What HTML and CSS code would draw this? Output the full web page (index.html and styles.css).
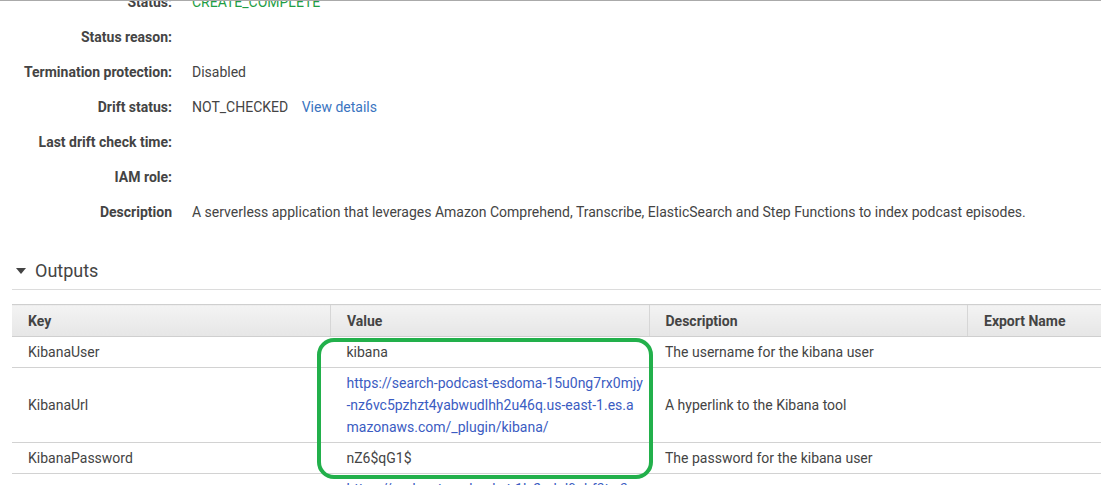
FILE: index.html
```html
<!DOCTYPE html>
<html>
<head>
<meta charset="utf-8">
<link rel="stylesheet" href="styles.css">
</head>
<body>
<div class="viewport">
  <div class="content">
    <dl class="details">
      <dt>Status:</dt><dd class="ok">CREATE_COMPLETE</dd>
      <dt>Status reason:</dt><dd></dd>
      <dt>Termination protection:</dt><dd>Disabled</dd>
      <dt>Drift status:</dt><dd>NOT_CHECKED <a class="link view" href="#">View details</a></dd>
      <dt>Last drift check time:</dt><dd></dd>
      <dt>IAM role:</dt><dd></dd>
      <dt>Description</dt><dd>A serverless application that leverages Amazon Comprehend, Transcribe, ElasticSearch and Step Functions to index podcast episodes.</dd>
    </dl>

    <h2 class="section"><span class="caret"></span>Outputs</h2>

    <div class="table-wrap">
      <table class="outputs">
        <thead>
          <tr><th>Key</th><th>Value</th><th>Description</th><th>Export Name</th></tr>
        </thead>
        <tbody>
          <tr><td>KibanaUser</td><td>kibana</td><td>The username for the kibana user</td><td></td></tr>
          <tr><td>KibanaUrl</td><td class="url"><a class="link" href="#"><span class="ln">https://search-podcast-esdoma-15u0ng7rx0mjy</span><span class="ln">-nz6vc5pzhzt4yabwudlhh2u46q.us-east-1.es.a</span><span class="ln">mazonaws.com/_plugin/kibana/</span></a></td><td>A hyperlink to the Kibana tool</td><td></td></tr>
          <tr><td>KibanaPassword</td><td>nZ6$qG1$</td><td>The password for the kibana user</td><td></td></tr>
          <tr><td>RssGeneratorUrl</td><td class="url"><a class="link" href="#"><span class="ln">https://podcast-rss-bucket-1lx2mkd9qhf3t.s3</span><span class="ln">.amazonaws.com/podcasts/feeds/index.html?so</span><span class="ln">urce=cloudformation-outputs</span></a></td><td>The URL of the podcast feed</td><td></td></tr>
        </tbody>
      </table>
      <div class="highlight"></div>
    </div>
  </div>
</div>
</body>
</html>
```

FILE: styles.css
```css
html, body {
  margin: 0;
  padding: 0;
  background: #fff;
}
body {
  font-family: Roboto, "Liberation Sans", Arial, sans-serif;
  font-size: 14px;
  color: #444;
}
.viewport {
  height: 484px;
  overflow: hidden;
  border-top: 1px solid #aaaaaa;
}
.content {
  margin-top: -16px;
}
.details {
  display: grid;
  grid-template-columns: 172px 1fr;
  column-gap: 20px;
  margin: 0;
}
.details dt {
  text-align: right;
  font-weight: 700;
  color: #444;
  line-height: 35px;
  height: 35px;
  white-space: nowrap;
}
.details dd {
  margin: 0;
  line-height: 35px;
  height: 35px;
  color: #444;
  white-space: nowrap;
}
.details dd.ok {
  color: #1f9e45;
}
.link {
  color: #3b5cc2;
  text-decoration: none;
}
.view {
  color: #3a74bf;
  margin-left: 10px;
}
.section {
  margin: 23px 0 0 12px;
  height: 36px;
  line-height: 36px;
  border-bottom: 1px solid #dcdcdc;
  font-size: 18px;
  font-weight: 400;
  color: #444;
  display: flex;
  align-items: center;
}
.caret {
  width: 0;
  height: 0;
  border-left: 5px solid transparent;
  border-right: 5px solid transparent;
  border-top: 6px solid #444;
  margin: 0 9px 0 4px;
}
.table-wrap {
  position: relative;
  margin: 14px 0 0 12px;
  width: 1274px;
}
.outputs {
  border-collapse: collapse;
  table-layout: fixed;
  width: 1274px;
}
.outputs th {
  height: 31px;
  padding: 0 16px;
  text-align: left;
  font-weight: 700;
  color: #444;
  background: linear-gradient(#f3f3f3, #e6e6e6);
  border-top: 1px solid #cfcfcf;
  border-bottom: 1px solid #cfcfcf;
  border-left: 1px solid #d6d6d6;
  white-space: nowrap;
}
.outputs th:first-child {
  border-left: none;
}
.outputs td {
  height: 31px;
  padding: 4px 2px 4px 16px;
  box-sizing: border-box;
  line-height: 22px;
  border-bottom: 1px solid #d2d2d2;
  color: #444;
  vertical-align: middle;
}
.outputs td.url .ln {
  display: block;
  white-space: nowrap;
}
.highlight {
  position: absolute;
  left: 305px;
  top: 34px;
  width: 336px;
  height: 141px;
  box-sizing: border-box;
  border: 4px solid #22b04b;
  border-radius: 17px;
  pointer-events: none;
}
```
